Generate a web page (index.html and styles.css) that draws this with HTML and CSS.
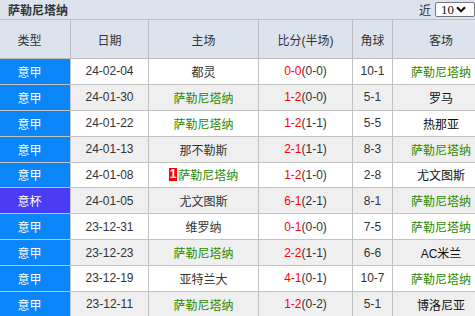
FILE: index.html
```html
<!DOCTYPE html>
<html lang="zh-CN">
<head>
<meta charset="utf-8">
<title>萨勒尼塔纳</title>
<link rel="stylesheet" href="styles.css">
</head>
<body>
<div class="panel">
  <div class="titlebar">
    <span class="title">萨勒尼塔纳</span>
    <div class="picker">
      <span class="picker-label">近</span>
      <span class="select"><span class="select-val">10</span><svg class="chev" width="10" height="7" viewBox="0 0 10 7"><path d="M1 1.2 L5 5.2 L9 1.2" fill="none" stroke="#111" stroke-width="2.2"/></svg></span>
    </div>
  </div>
  <div class="table">
    <div class="row head">
      <div class="cell c1">类型</div>
      <div class="cell">日期</div>
      <div class="cell">主场</div>
      <div class="cell">比分(半场)</div>
      <div class="cell">角球</div>
      <div class="cell c6">客场</div>
    </div>
    <div class="row">
      <div class="cell c1 lg">意甲</div>
      <div class="cell">24-02-04</div>
      <div class="cell">都灵</div>
      <div class="cell"><span class="ft">0-0</span>(0-0)</div>
      <div class="cell">10-1</div>
      <div class="cell c6 us">萨勒尼塔纳</div>
    </div>
    <div class="row alt">
      <div class="cell c1 lg">意甲</div>
      <div class="cell">24-01-30</div>
      <div class="cell us">萨勒尼塔纳</div>
      <div class="cell"><span class="ft">1-2</span>(0-0)</div>
      <div class="cell">5-1</div>
      <div class="cell c6">罗马</div>
    </div>
    <div class="row">
      <div class="cell c1 lg">意甲</div>
      <div class="cell">24-01-22</div>
      <div class="cell us">萨勒尼塔纳</div>
      <div class="cell"><span class="ft">1-2</span>(1-1)</div>
      <div class="cell">5-5</div>
      <div class="cell c6">热那亚</div>
    </div>
    <div class="row alt">
      <div class="cell c1 lg">意甲</div>
      <div class="cell">24-01-13</div>
      <div class="cell">那不勒斯</div>
      <div class="cell"><span class="ft">2-1</span>(1-1)</div>
      <div class="cell">8-3</div>
      <div class="cell c6 us">萨勒尼塔纳</div>
    </div>
    <div class="row">
      <div class="cell c1 lg">意甲</div>
      <div class="cell">24-01-08</div>
      <div class="cell us"><span class="badge">1</span>萨勒尼塔纳</div>
      <div class="cell"><span class="ft">1-2</span>(1-0)</div>
      <div class="cell">2-8</div>
      <div class="cell c6">尤文图斯</div>
    </div>
    <div class="row alt">
      <div class="cell c1 cup">意杯</div>
      <div class="cell">24-01-05</div>
      <div class="cell">尤文图斯</div>
      <div class="cell"><span class="ft">6-1</span>(2-1)</div>
      <div class="cell">8-1</div>
      <div class="cell c6 us">萨勒尼塔纳</div>
    </div>
    <div class="row">
      <div class="cell c1 lg">意甲</div>
      <div class="cell">23-12-31</div>
      <div class="cell">维罗纳</div>
      <div class="cell"><span class="ft">0-1</span>(0-0)</div>
      <div class="cell">7-5</div>
      <div class="cell c6 us">萨勒尼塔纳</div>
    </div>
    <div class="row alt">
      <div class="cell c1 lg">意甲</div>
      <div class="cell">23-12-23</div>
      <div class="cell us">萨勒尼塔纳</div>
      <div class="cell"><span class="ft">2-2</span>(1-1)</div>
      <div class="cell">6-6</div>
      <div class="cell c6">AC米兰</div>
    </div>
    <div class="row">
      <div class="cell c1 lg">意甲</div>
      <div class="cell">23-12-19</div>
      <div class="cell">亚特兰大</div>
      <div class="cell"><span class="ft">4-1</span>(0-1)</div>
      <div class="cell">10-7</div>
      <div class="cell c6 us">萨勒尼塔纳</div>
    </div>
    <div class="row alt">
      <div class="cell c1 lg">意甲</div>
      <div class="cell">23-12-11</div>
      <div class="cell us">萨勒尼塔纳</div>
      <div class="cell"><span class="ft">1-2</span>(0-2)</div>
      <div class="cell">5-1</div>
      <div class="cell c6">博洛尼亚</div>
    </div>
  </div>
</div>
</body>
</html>
```

FILE: styles.css
```css
html, body {
  margin: 0;
  padding: 0;
  background: #ffffff;
  overflow: hidden;
}
body {
  font-family: "Liberation Sans", "Noto Sans CJK SC", sans-serif;
  font-size: 12px;
  color: #333333;
}
.panel {
  width: 475px;
}
.titlebar {
  height: 19px;
  box-sizing: border-box;
  background: #dde3ec;
  display: flex;
  align-items: center;
  justify-content: space-between;
  padding-left: 8px;
}
.title {
  font-weight: bold;
  color: #333;
  font-size: 12px;
}
.picker {
  display: flex;
  align-items: center;
  gap: 4px;
}
.picker-label {
  color: #333;
}
.select {
  display: flex;
  align-items: center;
  height: 15px;
  width: 40px;
  box-sizing: border-box;
  background: #fff;
  border: 1px solid #767676;
  border-radius: 2px;
  padding-left: 5px;
  gap: 2px;
  color: #111;
  font-family: "Liberation Serif", serif;
  font-size: 13px;
}
.chev {
  display: block;
}
.table {
  border-top: 1px solid #bdbdbd;
}
.row {
  display: grid;
  grid-template-columns: 71px 78px 110px 94px 40px 1fr;
  height: 25.875px;
  box-sizing: border-box;
  border-bottom: 1px solid #c2c2c2;
  background: #ffffff;
}
.row.alt {
  background: #efefef;
}
.row.head {
  height: 39px;
  background: #dde3ec;
  border-bottom-color: #bdbdbd;
}
.cell {
  display: flex;
  align-items: center;
  justify-content: center;
  border-right: 1px solid #c2c2c2;
  white-space: nowrap;
  color: #333;
}
.head .cell {
  border-right-color: #bdbdbd;
}
.cell.c1 {
  padding-right: 11px;
}
.cell.c6 {
  padding-left: 14px;
  border-right: none;
  color: #111;
}
.cell.lg {
  background: #0a86f8;
  color: #fff;
}
.cell.cup {
  background: #4a3cf4;
  color: #fff;
}
.head .cell.c1, .head .cell.c6 {
  color: #333;
}
.cell.us {
  color: #2a8a00;
}
.ft {
  color: #ff0000;
}
.badge {
  display: inline-block;
  background: #ff0000;
  color: #fff;
  font-weight: bold;
  line-height: 13px;
  padding: 0 1px;
  margin-right: 1px;
}
```
